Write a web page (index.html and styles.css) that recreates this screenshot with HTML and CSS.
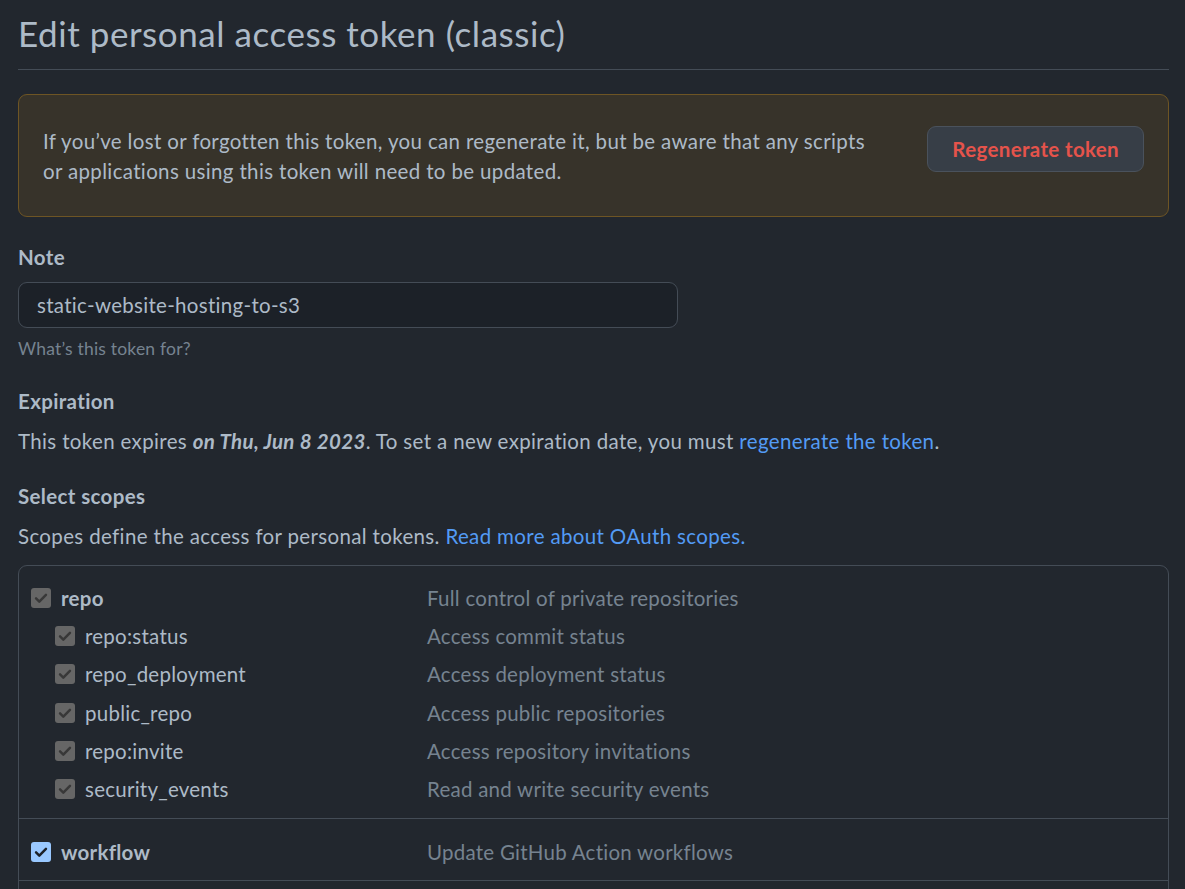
FILE: index.html
```html
<!DOCTYPE html>
<html lang="en">
<head>
<meta charset="utf-8">
<title>Edit personal access token (classic)</title>
<link rel="stylesheet" href="styles.css">
</head>
<body>
<main class="page">
  <h1 class="page-title">Edit personal access token (classic)</h1>

  <div class="flash">
    <p class="flash-text">If you’ve lost or forgotten this token, you can regenerate it, but be aware that any scripts<br>or applications using this token will need to be updated.</p>
    <button class="btn-danger" type="button">Regenerate token</button>
  </div>

  <div class="field">
    <label class="field-label" for="note">Note</label>
    <input class="field-input" id="note" type="text" value="static-website-hosting-to-s3">
    <p class="field-hint">What’s this token for?</p>
  </div>

  <section class="block">
    <h3 class="block-title">Expiration</h3>
    <p class="block-text">This token expires <strong class="date">on Thu, Jun 8 2023</strong>. To set a new expiration date, you must <a class="link" href="#">regenerate the token</a>.</p>
  </section>

  <section class="block">
    <h3 class="block-title">Select scopes</h3>
    <p class="block-text">Scopes define the access for personal tokens. <a class="link" href="#">Read more about OAuth scopes.</a></p>
  </section>

  <div class="scopes">
    <div class="scope-group">
      <div class="scope-row">
        <span class="scope-name main"><span class="cb cb-gray"><svg viewBox="0 0 16 16"><path d="M3.6 8.3l2.9 2.9 5.9-6"/></svg></span>repo</span>
        <span class="scope-desc">Full control of private repositories</span>
      </div>
      <div class="scope-row">
        <span class="scope-name sub"><span class="cb cb-gray"><svg viewBox="0 0 16 16"><path d="M3.6 8.3l2.9 2.9 5.9-6"/></svg></span>repo:status</span>
        <span class="scope-desc">Access commit status</span>
      </div>
      <div class="scope-row">
        <span class="scope-name sub"><span class="cb cb-gray"><svg viewBox="0 0 16 16"><path d="M3.6 8.3l2.9 2.9 5.9-6"/></svg></span>repo_deployment</span>
        <span class="scope-desc">Access deployment status</span>
      </div>
      <div class="scope-row">
        <span class="scope-name sub"><span class="cb cb-gray"><svg viewBox="0 0 16 16"><path d="M3.6 8.3l2.9 2.9 5.9-6"/></svg></span>public_repo</span>
        <span class="scope-desc">Access public repositories</span>
      </div>
      <div class="scope-row">
        <span class="scope-name sub"><span class="cb cb-gray"><svg viewBox="0 0 16 16"><path d="M3.6 8.3l2.9 2.9 5.9-6"/></svg></span>repo:invite</span>
        <span class="scope-desc">Access repository invitations</span>
      </div>
      <div class="scope-row">
        <span class="scope-name sub"><span class="cb cb-gray"><svg viewBox="0 0 16 16"><path d="M3.6 8.3l2.9 2.9 5.9-6"/></svg></span>security_events</span>
        <span class="scope-desc">Read and write security events</span>
      </div>
    </div>
    <div class="scope-group second">
      <div class="scope-row">
        <span class="scope-name main"><span class="cb cb-blue"><svg viewBox="0 0 16 16"><path d="M3.6 8.3l2.9 2.9 5.9-6"/></svg></span>workflow</span>
        <span class="scope-desc">Update GitHub Action workflows</span>
      </div>
    </div>
    <div class="scope-group spacer"></div>
  </div>
</main>
</body>
</html>
```

FILE: styles.css
```css
* { box-sizing: border-box; }

html, body {
  margin: 0;
  padding: 0;
  background: #22272e;
  color: #adbac7;
  font-family: Lato, "Open Sans", "Liberation Sans", sans-serif;
  font-size: 20.5px;
  letter-spacing: 0.35px;
  line-height: 30px;
  overflow: hidden;
}

.page {
  padding: 12px 16px 0 18px;
}

.page-title {
  margin: 0;
  padding-bottom: 14px;
  border-bottom: 1px solid #444c56;
  font-size: 35px;
  letter-spacing: 0.55px;
  line-height: 43px;
  font-weight: 400;
  color: #adbac7;
}

.flash {
  margin-top: 24px;
  display: flex;
  align-items: flex-start;
  justify-content: space-between;
  padding: 31px 24px 30px 24px;
  background: #37332a;
  border: 1px solid #6e5524;
  border-radius: 9px;
}

.flash-text {
  margin: 0;
}

.btn-danger {
  height: 46px;
  padding: 0 24px;
  background: #373e47;
  border: 1px solid #4a525c;
  border-radius: 9px;
  color: #e5534b;
  font-family: inherit;
  font-size: 20.5px;
  letter-spacing: 0.35px;
  font-weight: 700;
  line-height: 44px;
}

.field {
  margin-top: 25px;
}

.field-label {
  display: block;
  font-weight: 700;
  line-height: 30px;
}

.field-input {
  display: block;
  margin-top: 10px;
  width: 660px;
  height: 46px;
  padding: 0 18px;
  background: #1c2128;
  border: 1px solid #444c56;
  border-radius: 9px;
  color: #adbac7;
  font-family: inherit;
  font-size: 20.5px;
  letter-spacing: 0.3px;
}

.field-hint {
  margin: 9px 0 0;
  font-size: 17.5px;
  letter-spacing: 0.2px;
  line-height: 24px;
  color: #768390;
}

.block {
  margin-top: 25px;
}

.block-title {
  margin: 0;
  font-size: 20.5px;
  font-weight: 700;
  line-height: 30px;
}

.block-text {
  margin: 10px 0 0;
}

.date {
  font-style: italic;
  font-weight: 700;
}

.link {
  color: #539bf5;
  text-decoration: none;
}

.scopes {
  margin-top: 14px;
  border: 1px solid #444c56;
  border-radius: 9px;
}

.scope-group {
  padding: 13px 12px 10px 12px;
}

.scope-group.second {
  padding-top: 14px;
  padding-bottom: 9px;
}

.scope-group + .scope-group {
  border-top: 1px solid #444c56;
}

.scope-group.spacer {
  height: 60px;
}

.scope-row {
  display: grid;
  grid-template-columns: 396px 1fr;
  height: 38.2px;
  align-items: center;
  letter-spacing: 0.25px;
}

.scope-name {
  display: flex;
  align-items: center;
  gap: 10px;
  color: #adbac7;
}

.scope-name.main {
  font-weight: 700;
}

.scope-name.sub {
  padding-left: 24px;
}

.scope-desc {
  color: #768390;
}

.cb {
  display: inline-flex;
  align-items: center;
  justify-content: center;
  width: 20px;
  height: 20px;
  border-radius: 3px;
  flex: none;
}

.cb svg {
  width: 18px;
  height: 18px;
  fill: none;
  stroke-width: 2.2;
  stroke-linecap: round;
  stroke-linejoin: round;
}

.cb-gray {
  background: #666666;
}

.cb-gray svg {
  stroke: #383838;
}

.cb-blue {
  background: #99c8ff;
}

.cb-blue svg {
  stroke: #1c2128;
}
```
